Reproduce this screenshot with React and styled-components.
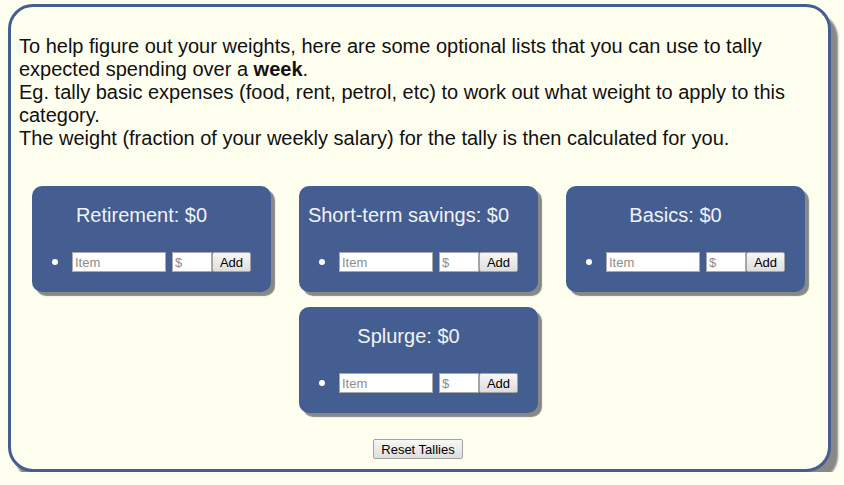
import React from 'react';
import styled, { createGlobalStyle } from 'styled-components';

const GlobalStyle = createGlobalStyle`
  html, body {
    margin: 0;
    background: #fffff0;
    font-family: "Liberation Sans", Arial, sans-serif;
  }
`;

const Panel = styled.div`
  box-sizing: border-box;
  width: 823px;
  margin: 4px 0 0 8px;
  padding: 28px 8px 10px;
  border: 3px solid #445e92;
  border-radius: 25px;
  background: #fffff0;
  box-shadow: 7px 9px 2px #888;
`;

const Intro = styled.p`
  margin: 0;
  font-size: 20px;
  line-height: 23px;
  color: #111;
`;

const Cards = styled.div`
  display: flex;
  flex-wrap: wrap;
  justify-content: center;
  gap: 15px 28px;
  margin: 36px 0 0 -2px;
`;

const Card = styled.div`
  box-sizing: border-box;
  width: 239px;
  height: 106px;
  padding-top: 18px;
  background: #445e92;
  border-radius: 10px;
  box-shadow: 4px 4px 1px #888;
`;

const Title = styled.h3`
  margin: 0;
  padding-right: 20px;
  text-align: center;
  font-size: 20px;
  line-height: 23px;
  font-weight: normal;
  color: #f2f2f2;
`;

const List = styled.ul`
  margin: 25px 0 0;
  padding-left: 40px;
  list-style: none;
  font-size: 13px;
`;

const Row = styled.li`
  height: 20px;
  line-height: 20px;
  white-space: nowrap;

  &::before {
    content: '';
    display: inline-block;
    width: 6px;
    height: 6px;
    margin: 7px 14px 0 -20px;
    vertical-align: top;
    border-radius: 50%;
    background: #fff;
  }
`;

const Input = styled.input`
  box-sizing: border-box;
  width: ${p => p.$w}px;
  height: 20px;
  margin: 0 ${p => p.$gap || 0}px 0 0;
  padding: 1px 2px;
  vertical-align: top;
  border: 1px solid #a9a9a9;
  background: #fff;
  font-family: "Liberation Sans", Arial, sans-serif;
  font-size: 13px;
  color: #000;
  &::placeholder { color: #8d8d8d; }
`;

const Button = styled.button`
  box-sizing: border-box;
  width: ${p => p.$w}px;
  height: 20px;
  padding: 0;
  vertical-align: top;
  border: 1px solid #a3a3a3;
  border-radius: 2px;
  background: linear-gradient(#f7f7f7, #dedede);
  font-family: "Liberation Sans", Arial, sans-serif;
  font-size: 13px;
  color: #000;
`;

const Footer = styled.div`
  display: flex;
  justify-content: center;
  margin-top: 26px;
  padding-right: 3px;
`;

const tallies = ['Retirement', 'Short-term savings', 'Basics', 'Splurge'];

export default function App() {
  return (
    <>
      <GlobalStyle />
      <Panel>
        <Intro>
          To help figure out your weights, here are some optional lists that you can use to tally
          expected spending over a <b>week</b>.<br />
          Eg. tally basic expenses (food, rent, petrol, etc) to work out what weight to apply to this
          category.<br />
          The weight (fraction of your weekly salary) for the tally is then calculated for you.
        </Intro>
        <Cards>
          {tallies.map(name => (
            <Card key={name}>
              <Title>{name}: $0</Title>
              <List>
                <Row>
                  <Input $w={94} $gap={6} placeholder="Item" />
                  <Input $w={40} placeholder="$" />
                  <Button $w={39}>Add</Button>
                </Row>
              </List>
            </Card>
          ))}
        </Cards>
        <Footer>
          <Button $w={90}>Reset Tallies</Button>
        </Footer>
      </Panel>
    </>
  );
}
